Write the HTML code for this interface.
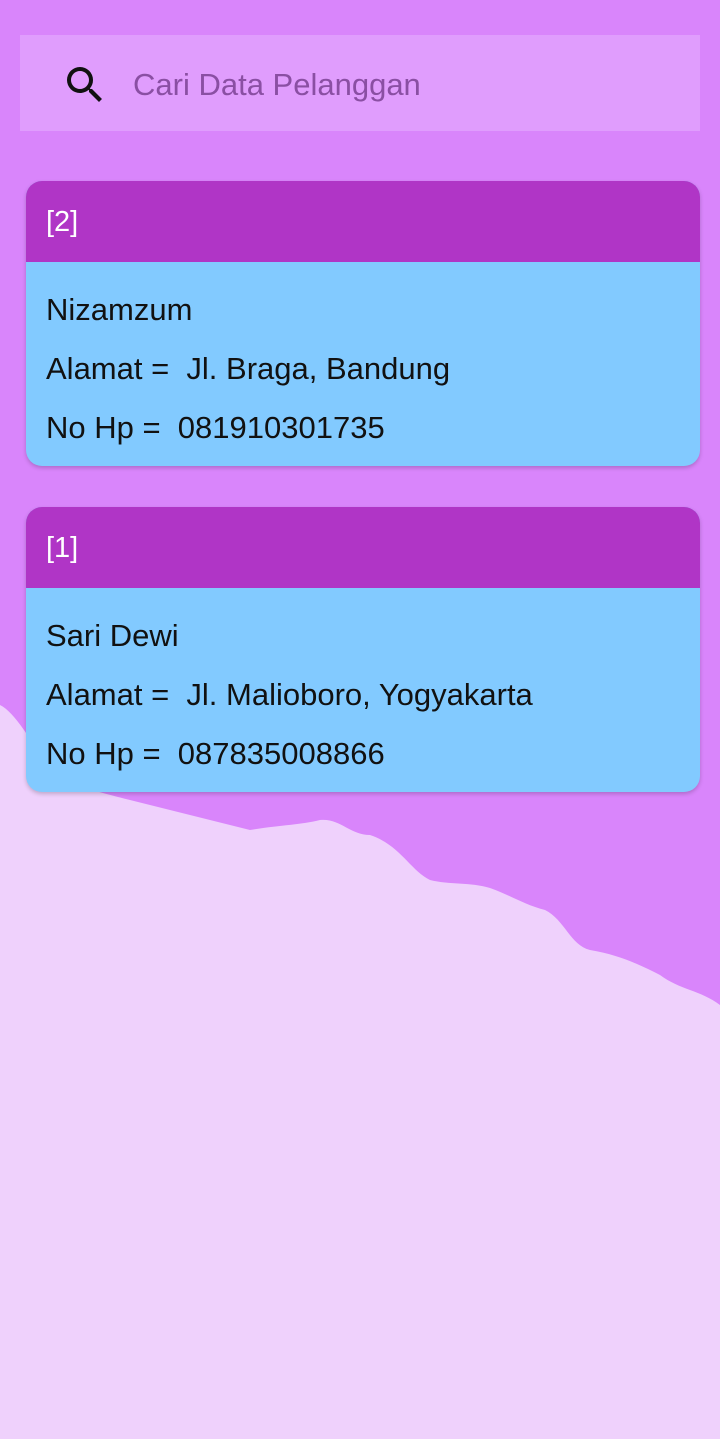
<!DOCTYPE html><html><head><style>
body{margin:0;width:720px;height:1439px;background:#d985fb;position:relative;overflow:hidden;font-family:"Liberation Sans",Roboto,sans-serif;}
svg.bg{position:absolute;left:0;top:0}
.search{position:absolute;left:20px;top:35px;width:680px;height:96px;background:#e09dfd;}
.search span{position:absolute;left:113px;top:32px;font-size:31px;color:#8a4fa3;}
.card{position:absolute;left:26px;width:674px;border-radius:16px;overflow:hidden;box-shadow:0 2px 4px rgba(0,0,0,.2);background:#82caff}
.hd{height:81px;background:#b035c6;color:#fff;font-size:29px;line-height:83px;padding-left:20px}
.bd{padding:20px 20px 0;font-size:31px;color:#111;height:204px;box-sizing:border-box}
.bd div{height:59px;line-height:56px}
</style></head><body>
<svg class="bg" width="720" height="1439"><path d="M0 705 C20 715 40 760 60 780 C90 790 110 795 130 800 L250 830 C280 825 300 825 320 820 C340 818 350 835 370 835 C400 845 410 870 430 880 C450 885 470 882 490 888 C510 895 525 905 545 910 C565 920 570 945 590 950 C620 955 640 965 660 975 C680 990 700 990 720 1005 L720 1439 L0 1439 Z" fill="#efd1fc"/></svg>
<div class="search"><svg style="position:absolute;left:41px;top:26px" width="48" height="48" viewBox="0 0 24 24"><path d="M15.5 14h-.79l-.28-.27A6.47 6.47 0 0016 9.5 6.5 6.5 0 109.5 16c1.61 0 3.09-.59 4.230-1.57l.27.28v.79l5 4.99L20.49 19l-4.99-5zm-6 0C7.01 14 5 11.990 5 9.5S7.01 5 9.5 5 14 7.01 14 9.5 11.99 14 9.5 14z" fill="#111"/></svg><span>Cari Data Pelanggan</span></div>
<div class="card" style="top:181px"><div class="hd">[2]</div><div class="bd"><div>Nizamzum</div><div>Alamat =&nbsp; Jl. Braga, Bandung</div><div>No Hp =&nbsp; 081910301735</div></div></div>
<div class="card" style="top:507px"><div class="hd">[1]</div><div class="bd"><div>Sari Dewi</div><div>Alamat =&nbsp; Jl. Malioboro, Yogyakarta</div><div>No Hp =&nbsp; 087835008866</div></div></div>
</body></html>
